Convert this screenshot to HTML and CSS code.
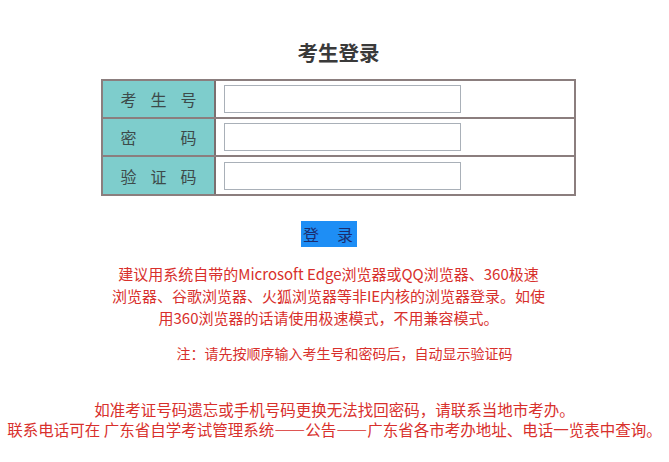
FILE: index.html
```html
<!DOCTYPE html>
<html lang="zh-CN">
<head>
<meta charset="utf-8">
<title>考生登录</title>
<link rel="stylesheet" href="styles.css">
</head>
<body>
<div class="page">
  <h1 class="title">考生登录</h1>
  <div class="form">
    <div class="row">
      <div class="label"><span class="lt"><span>考</span><span>生</span><span>号</span></span></div>
      <div class="field"><input class="inp" type="text"></div>
    </div>
    <div class="row">
      <div class="label"><span class="lt"><span>密</span><span>码</span></span></div>
      <div class="field"><input class="inp" type="password"></div>
    </div>
    <div class="row last">
      <div class="label"><span class="lt"><span>验</span><span>证</span><span>码</span></span></div>
      <div class="field"><input class="inp" type="text"></div>
    </div>
  </div>
  <div class="btnrow"><button class="btn"><span>登</span><span>录</span></button></div>
  <p class="tip">建议用系统自带的Microsoft Edge浏览器或QQ浏览器、360极速<br>浏览器、谷歌浏览器、火狐浏览器等非IE内核的浏览器登录。如使<br>用360浏览器的话请使用极速模式，不用兼容模式。</p>
  <p class="note">注：请先按顺序输入考生号和密码后，自动显示验证码</p>
  <p class="contact">如准考证号码遗忘或手机号码更换无法找回密码，请联系当地市考办。<br>联系电话可在 广东省自学考试管理系统——公告——广东省各市考办地址、电话一览表中查询。</p>
</div>
</body>
</html>
```

FILE: styles.css
```css
html, body {
  margin: 0;
  padding: 0;
  background: #fff;
}
body {
  font-family: "Noto Sans CJK SC", "Noto Sans", sans-serif;
  color: #333;
}
.page {
  display: flex;
  flex-direction: column;
  align-items: center;
}
.title {
  margin: 38px 0 0 8px;
  font-size: 20.5px;
  line-height: 28px;
  font-weight: bold;
  color: #3a3a3a;
}
.form {
  margin: 13px 0 0 8px;
  width: 475px;
  border: 2px solid #8b7e7e;
  border-bottom-width: 1px;
  box-sizing: border-box;
}
.row {
  display: flex;
  height: 38px;
  border-bottom: 2px solid #8b7e7e;
  box-sizing: border-box;
}
.row.last {
  border-bottom: 1px solid #8b7e7e;
}
.label {
  width: 113px;
  background: #7ecdcc;
  border-right: 2px solid #7b6f6f;
  display: flex;
  align-items: center;
  justify-content: center;
  box-sizing: border-box;
}
.lt {
  width: 76px;
  display: flex;
  justify-content: space-between;
  font-size: 16px;
  color: #3d4a4a;
}
.field {
  flex: 1;
  display: flex;
  align-items: center;
  padding-left: 8px;
}
.inp {
  width: 237px;
  height: 28px;
  box-sizing: border-box;
  border: 1px solid #a9b0b8;
  margin: 0;
  padding: 0 4px;
  background: #fff;
}
.btnrow {
  margin-top: 25px;
  margin-right: 11px;
}
.btn {
  width: 56px;
  height: 26px;
  padding: 0 4px 0 2px;
  border: none;
  background: #1e8ef5;
  color: #1c2d6e;
  font-family: "Noto Sans CJK SC", sans-serif;
  font-size: 16px;
  line-height: 26px;
  display: flex;
  justify-content: space-between;
  align-items: center;
}
.tip {
  margin: 16px 0 0 -12px;
  font-size: 15px;
  line-height: 22px;
  color: #d8302c;
  text-align: center;
}
.note {
  margin: 13px 0 0 20px;
  font-size: 14px;
  line-height: 22px;
  color: #d8302c;
  text-align: center;
}
.contact {
  margin: 35px 0 0 0;
  font-size: 15.5px;
  line-height: 20px;
  color: #d8302c;
  text-align: center;
}
```
